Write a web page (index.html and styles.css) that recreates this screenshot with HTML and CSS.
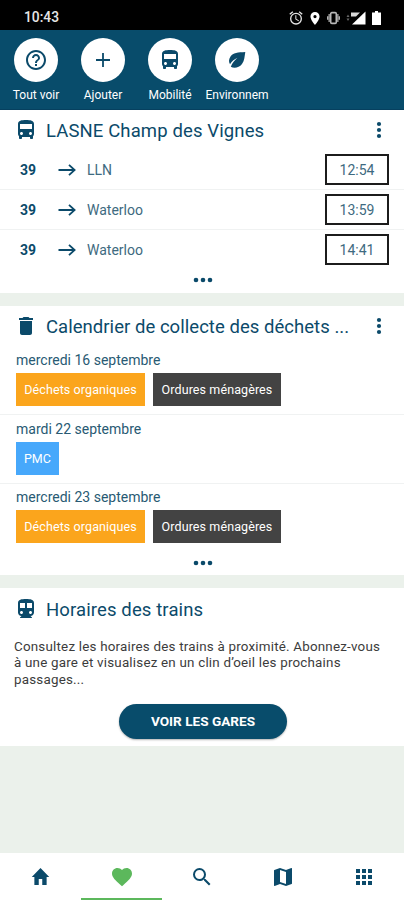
FILE: index.html
```html
<!DOCTYPE html>
<html lang="fr">
<head>
<meta charset="utf-8">
<title>Favoris</title>
<link rel="stylesheet" href="styles.css">
</head>
<body>
<svg class="defs" aria-hidden="true">
  <symbol id="bus" viewBox="0 0 24 24"><path d="M4 16c0 .88.39 1.67 1 2.22V20c0 .55.45 1 1 1h1c.55 0 1-.45 1-1v-1h8v1c0 .55.45 1 1 1h1c.55 0 1-.45 1-1v-1.780c.61-.55 1-1.340 1-2.220V6c0-3.500-3.580-4-8-4s-8 .5-8 4v10zm3.500 1c-.83 0-1.500-.67-1.500-1.500S6.670 14 7.500 14s1.500.67 1.500 1.500S8.330 17 7.500 17zm9 0c-.83 0-1.500-.67-1.500-1.500s.67-1.500 1.500-1.500 1.500.67 1.500 1.500-.67 1.500-1.500 1.500zm1.500-6H6V6h12v5z"/></symbol>
  <symbol id="train" viewBox="0 0 24 24"><path d="M12 2c-4.420 0-8 .5-8 4v9.500C4 17.430 5.570 19 7.500 19L6 20.500v.5h12v-.5L16.500 19c1.930 0 3.500-1.570 3.500-3.500V6c0-3.500-3.580-4-8-4zM7.500 17c-.83 0-1.500-.67-1.500-1.500S6.670 14 7.500 14s1.500.67 1.500 1.500S8.330 17 7.500 17zm3.500-6H6V6h5v5zm5.500 6c-.83 0-1.500-.67-1.500-1.500s.67-1.500 1.500-1.500 1.500.67 1.500 1.500-.67 1.500-1.500 1.500zm1.500-6h-5V6h5v5z"/></symbol>
  <symbol id="arrow" viewBox="0 0 18 14"><path d="M0.500 7H16.500M11 1.800L16.600 7L11 12.200" fill="none" stroke="currentColor" stroke-width="1.800"/></symbol>
  <symbol id="more" viewBox="0 0 6 18"><circle cx="3" cy="3" r="2.100"/><circle cx="3" cy="9" r="2.100"/><circle cx="3" cy="15" r="2.100"/></symbol>
  <symbol id="dots" viewBox="0 0 20 6"><circle cx="3" cy="3" r="2.300"/><circle cx="10" cy="3" r="2.300"/><circle cx="17" cy="3" r="2.300"/></symbol>
</svg>

<header class="status">
  <span class="clock">10:43</span>
  <div class="status-icons">
    <svg class="s-alarm" viewBox="0 0 24 24"><path d="M22 5.720l-4.600-3.860-1.290 1.530 4.600 3.860L22 5.720zM7.880 3.390L6.600 1.860 2 5.710l1.290 1.530 4.590-3.850zM12.500 8H11v6l4.750 2.850.75-1.230-4-2.370V8zM12 4a9 9 0 1 0 0 18 9 9 0 0 0 0-18zm0 16a7 7 0 1 1 0-14 7 7 0 0 1 0 14z"/></svg>
    <svg class="s-pin" viewBox="5 2 14 20"><path d="M12 2C8.130 2 5 5.130 5 9c0 5.250 7 13 7 13s7-7.750 7-13c0-3.870-3.130-7-7-7zm0 9.500a2.500 2.500 0 1 1 0-5 2.500 2.500 0 0 1 0 5z"/></svg>
    <svg class="s-vibe" viewBox="0 0 14 14"><rect x="4" y="1.200" width="6" height="11.600" rx="1.200" fill="none" stroke="currentColor" stroke-width="1.700"/><path d="M2.300 2.800v8.400M.7 5v4M11.700 2.800v8.400M13.300 5v4" stroke="currentColor" stroke-width="1.300"/></svg>
    <svg class="s-signal" viewBox="0 0 20 14"><path d="M19.500.5v13H6z"/><path d="M5 1.500h9l-4 4H5z" opacity=".85"/><path d="M2 3.500l1.500 2.500h-3zM2 10L.5 7.500h3z" opacity=".4"/></svg>
    <svg class="s-battery" viewBox="0 0 9 14"><path d="M3 0h3v1.500h3V14H0V1.500h3z"/></svg>
  </div>
</header>

<nav class="shortcuts">
  <a class="shortcut"><span class="disc"><svg viewBox="0 0 24 24"><path d="M11 18h2v-2h-2v2zm1-16C6.480 2 2 6.480 2 12s4.480 10 10 10 10-4.480 10-10S17.520 2 12 2zm0 18c-4.410 0-8-3.590-8-8s3.590-8 8-8 8 3.590 8 8-3.590 8-8 8zm0-14c-2.210 0-4 1.790-4 4h2c0-1.100.9-2 2-2s2 .9 2 2c0 2-3 1.750-3 5h2c0-2.250 3-2.500 3-5 0-2.210-1.790-4-4-4z"/></svg></span><span class="label">Tout voir</span></a>
  <a class="shortcut"><span class="disc"><svg viewBox="0 0 24 24"><path d="M19 12.900h-6.100V19h-1.800v-6.100H5v-1.800h6.100V5h1.800v6.100H19z"/></svg></span><span class="label">Ajouter</span></a>
  <a class="shortcut"><span class="disc"><svg><use href="#bus"/></svg></span><span class="label">Mobilité</span></a>
  <a class="shortcut"><span class="disc"><svg viewBox="0 0 24 24"><path d="M20.300 4C13 4.300 8 4.800 5.500 8.500c-2 3-1.800 5.700-.5 7.800 2-3.100 4.500-5.200 7.500-6.500-2.900 2.400-5.200 5.200-6.700 9C9 20.500 14 20 17 16c2.700-3.700 2.500-7.500 3.300-12z"/></svg></span><span class="label">Environnem</span></a>
</nav>

<main class="feed">
  <section class="card">
    <div class="card-head head-bus">
      <svg class="head-icon"><use href="#bus"/></svg>
      <h2 class="title">LASNE Champ des Vignes</h2>
      <svg class="more"><use href="#more"/></svg>
    </div>
    <div class="trip"><b class="line">39</b><svg class="arrow"><use href="#arrow"/></svg><span class="dest">LLN</span><span class="time">12:54</span></div>
    <div class="trip"><b class="line">39</b><svg class="arrow"><use href="#arrow"/></svg><span class="dest">Waterloo</span><span class="time">13:59</span></div>
    <div class="trip"><b class="line">39</b><svg class="arrow"><use href="#arrow"/></svg><span class="dest">Waterloo</span><span class="time">14:41</span></div>
    <div class="expand"><svg><use href="#dots"/></svg></div>
  </section>

  <section class="card">
    <div class="card-head">
      <svg class="head-icon" viewBox="0 0 24 24"><path d="M6 19c0 1.100.9 2 2 2h8c1.100 0 2-.9 2-2V7H6v12zM19 4h-3.500l-1-1h-5l-1 1H5v2h14V4z"/></svg>
      <h2 class="title title-waste">Calendrier de collecte des déchets ...</h2>
      <svg class="more"><use href="#more"/></svg>
    </div>
    <div class="pickup pickup-first"><div class="date">mercredi 16 septembre</div><div class="chips"><span class="chip organic">Déchets organiques</span><span class="chip household">Ordures ménagères</span></div></div>
    <div class="pickup"><div class="date">mardi 22 septembre</div><div class="chips"><span class="chip pmc">PMC</span></div></div>
    <div class="pickup"><div class="date">mercredi 23 septembre</div><div class="chips"><span class="chip organic">Déchets organiques</span><span class="chip household">Ordures ménagères</span></div></div>
    <div class="expand expand-waste"><svg><use href="#dots"/></svg></div>
  </section>

  <section class="card card-train">
    <div class="card-head head-train">
      <svg class="head-icon"><use href="#train"/></svg>
      <h2 class="title">Horaires des trains</h2>
    </div>
    <p class="intro">Consultez les horaires des trains à proximité. Abonnez-vous<br>à une gare et visualisez en un clin d’oeil les prochains<br>passages...</p>
    <button class="cta">VOIR LES GARES</button>
  </section>
</main>

<nav class="tabs">
  <a class="tab"><svg class="home" viewBox="0 0 24 24" preserveAspectRatio="none"><path d="M10 20v-6h4v6h5v-8h3L12 3 2 12h3v8z"/></svg></a>
  <a class="tab active"><svg viewBox="0 0 24 24"><path d="M12 21.350l-1.450-1.320C5.400 15.360 2 12.280 2 8.500 2 5.420 4.420 3 7.500 3c1.740 0 3.410.81 4.500 2.090C13.090 3.810 14.760 3 16.500 3 19.580 3 22 5.420 22 8.500c0 3.780-3.400 6.860-8.550 11.540L12 21.350z"/></svg></a>
  <a class="tab"><svg viewBox="0 0 24 24"><path d="M15.500 14h-.79l-.28-.27A6.471 6.471 0 0 0 16 9.500 6.500 6.500 0 1 0 9.500 16c1.610 0 3.090-.59 4.230-1.570l.27.28v.79l5 4.990L20.490 19l-4.990-5zm-6 0C7.010 14 5 11.990 5 9.500S7.010 5 9.500 5 14 7.010 14 9.500 11.990 14 9.500 14z"/></svg></a>
  <a class="tab"><svg viewBox="0 0 24 24"><path d="M20.500 3l-.16.03L15 5.100 9 3 3.360 4.900c-.21.07-.36.25-.36.48V20.500c0 .28.22.5.5.5l.16-.03L9 18.900l6 2.100 5.640-1.900c.21-.07.36-.25.36-.48V3.500c0-.28-.22-.5-.5-.5zM15 19l-6-2.110V5l6 2.110V19z"/></svg></a>
  <a class="tab"><svg viewBox="0 0 24 24"><path d="M4 8h4V4H4v4zm6 12h4v-4h-4v4zm-6 0h4v-4H4v4zm0-6h4v-4H4v4zm6 0h4v-4h-4v4zm6-10v4h4V4h-4zm-6 4h4V4h-4v4zm6 6h4v-4h-4v4zm0 6h4v-4h-4v4z"/></svg></a>
</nav>
</body>
</html>
```
FILE: styles.css
```css
* { box-sizing: border-box; }

body {
  margin: 0;
  height: 900px;
  display: flex;
  flex-direction: column;
  overflow: hidden;
  background: #ebf1eb;
  color: #0b4a6a;
  font-family: Roboto, "Liberation Sans", sans-serif;
}

svg { display: block; fill: currentColor; flex: none; }
.defs { display: none; }

.status {
  height: 30px;
  flex: none;
  display: flex;
  justify-content: space-between;
  align-items: center;
  padding: 5px 23px 0 24px;
  background: #000;
  color: #e6e6e6;
}
.clock { margin-top: -1px; font-size: 13.8px; font-weight: 500; line-height: 16px; }
.status-icons { display: flex; align-items: center; height: 16px; padding-top: 1px; }
.s-alarm { width: 16px; height: 16px; margin-right: 6px; }
.s-pin { width: 10px; height: 13px; margin-right: 7px; color: #fff; }
.s-vibe { width: 13px; height: 14px; margin-right: 6px; opacity: 0.8; }
.s-signal { width: 20px; height: 14px; margin-right: 6px; color: #fff; }
.s-battery { width: 9px; height: 14px; color: #fff; }

.shortcuts {
  height: 80px;
  flex: none;
  display: flex;
  padding: 8px 0 0 2.500px;
  background: #084c6b;
  border-bottom: 1px solid #06405f;
}
.shortcut { width: 67px; display: flex; flex-direction: column; align-items: center; }
.disc {
  width: 44px;
  height: 44px;
  border-radius: 50%;
  display: grid;
  place-items: center;
  background: #fff;
}
.disc svg { width: 24px; height: 24px; }
.label {
  margin-top: 5px;
  color: #fff;
  font-size: 12px;
  line-height: 17px;
  white-space: nowrap;
}

.feed { flex: 1; display: flex; flex-direction: column; gap: 13px; }
.card { background: #fff; flex: none; }
.card-head { height: 42px; display: flex; align-items: center; padding: 0 22px 0 14px; }
.head-bus { height: 40px; padding-top: 2px; }
.head-train { height: 43px; padding-top: 1px; }
.head-icon { width: 24px; height: 24px; margin: -2px 8px 0 0; }
.title {
  flex: 1;
  margin: 0;
  font-size: 18.500px;
  font-weight: 400;
  letter-spacing: 0.12px;
  line-height: 24px;
  white-space: nowrap;
}
.title-waste { letter-spacing: 0.04px; }
.more { width: 6px; height: 18px; margin-top: -3px; }

.trip {
  height: 40px;
  display: flex;
  align-items: center;
  padding: 0 15px 0 20px;
  border-bottom: 1px solid #f0f2f2;
  font-size: 14px;
}
.trip:nth-last-child(2) { border-bottom-color: transparent; }
.line { width: 38px; font-size: 14px; }
.arrow { width: 18px; height: 14px; margin-right: 11px; }
.dest { flex: 1; color: #3e6a80; }
.time {
  width: 64px;
  height: 31px;
  border: 2px solid #1c1c1c;
  line-height: 28px;
  text-align: center;
  color: #3e6a80;
}
.expand { height: 23px; display: flex; justify-content: center; padding: 7px 0 0 1px; }
.expand svg { width: 20px; height: 6px; }

.pickup { height: 68.500px; padding: 5.500px 16px 0; border-bottom: 1px solid #f0f2f2; }
.pickup-first { height: 67px; padding-top: 4px; }
.pickup:nth-last-child(2) { border-bottom-color: transparent; }
.date { height: 21px; font-size: 14px; line-height: 17px; color: #285a73; white-space: nowrap; }
.chips { display: flex; gap: 8px; }
.chip {
  height: 33px;
  line-height: 34px;
  text-align: center;
  font-size: 12.5px;
  letter-spacing: 0.1px;
  color: #fff;
  white-space: nowrap;
}
.organic { width: 129px; background: #fba51c; }
.household { width: 128px; background: #434343; }
.pmc { width: 43px; background: #47a8fb; }
.expand-waste { padding-top: 8px; }

.card-train { height: 158px; display: flex; flex-direction: column; }
.intro {
  margin: 8px 14px 0;
  font-size: 13.4px;
  letter-spacing: 0.2px;
  line-height: 16.300px;
  color: #3c3c3c;
  white-space: nowrap;
}
.cta {
  align-self: center;
  width: 168px;
  height: 35px;
  margin: 16px 0 0 2px;
  padding: 0;
  border: 0;
  border-radius: 18px;
  background: #084c6b;
  box-shadow: 0 1px 2px rgba(0, 0, 0, 0.3);
  color: #fff;
  font: 700 13.6px Roboto, sans-serif;
}

.tabs { height: 47px; flex: none; display: flex; background: #fff; }
.tab { flex: 1; display: flex; justify-content: center; padding: 12px 0 0 1px; border-bottom: 2px solid transparent; }
.tab svg { width: 24px; height: 24px; }
.tab .home { width: 21px; }
.active { color: #5cb85c; border-color: #5cb85c; }
```
